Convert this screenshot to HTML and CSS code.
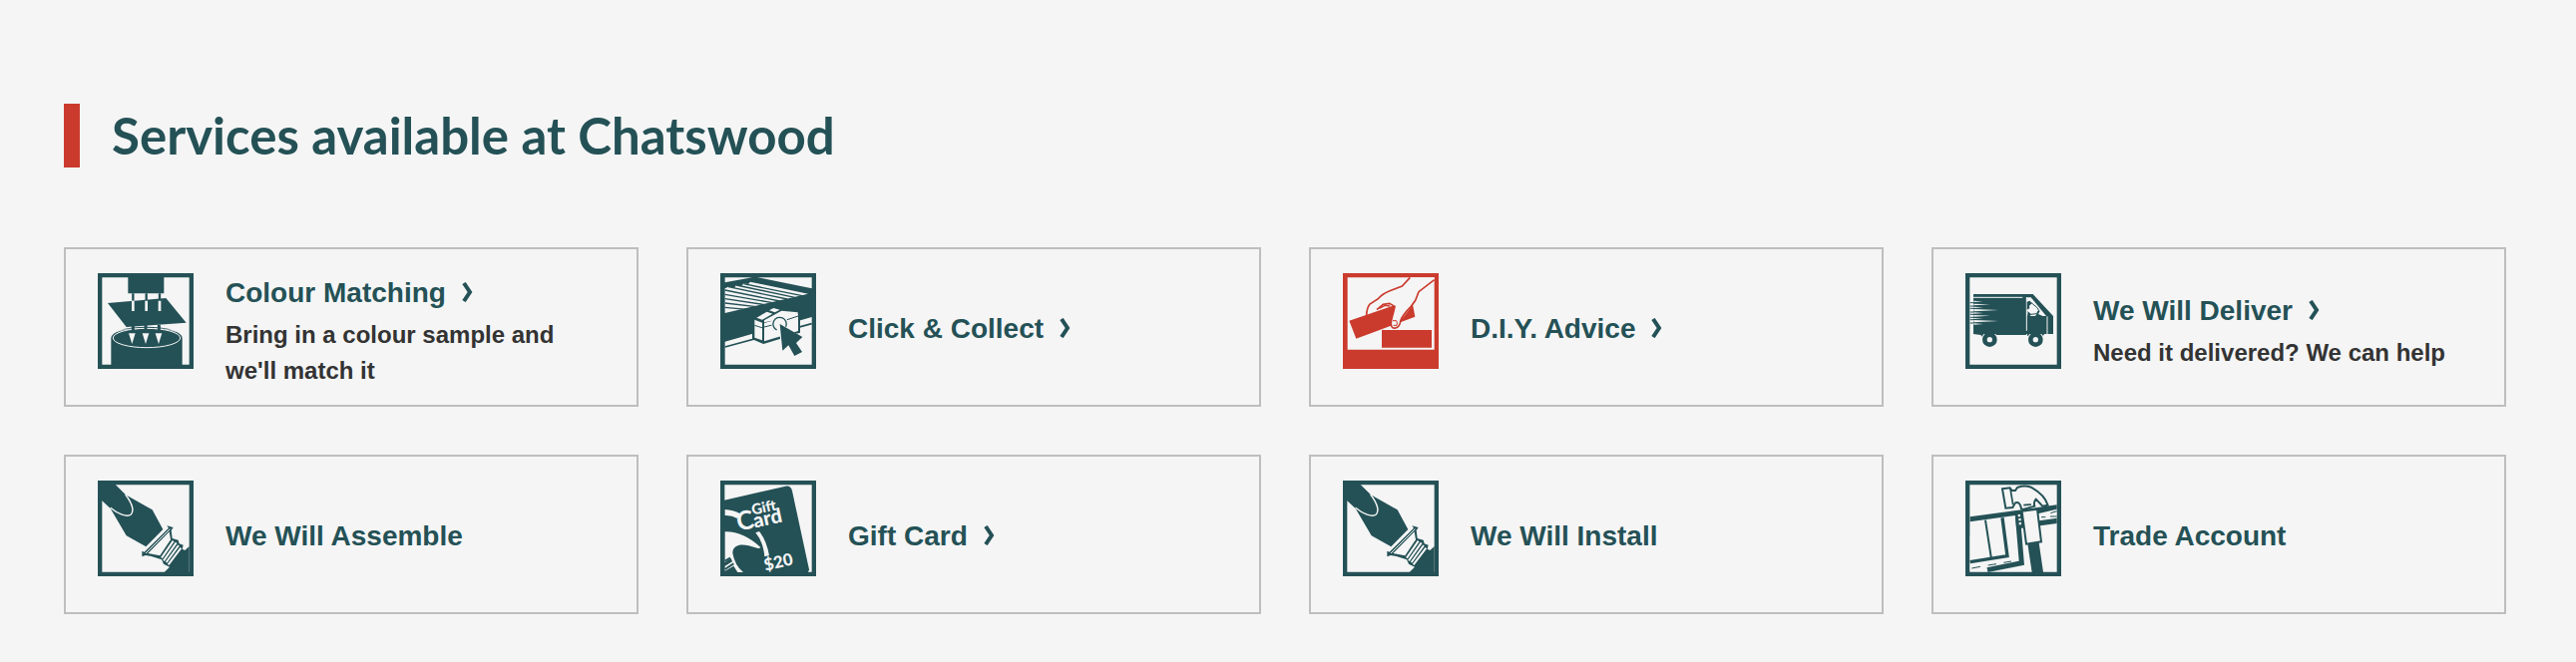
FILE: index.html
```html
<!DOCTYPE html>
<html lang="en">
<head>
    <meta charset="UTF-8">
    <meta name="viewport" content="width=device-width, initial-scale=1.0">
    <title>Services available at Chatswood</title>
    <link rel="stylesheet" href="styles.css">
</head>
<body>
    <section class="services">
        <h2 class="services-heading">Services available at Chatswood</h2>

        <ul class="services-grid">
            <li>
                <a class="card" href="#colour-matching">
                    <svg class="icon" viewBox="24 27 288 288" aria-hidden="true">
                        <path class="frame" d="M30.500 33.500H305.500V308.500H30.500Z"/>
                        <path class="ink" d="M115 30H223V88H115Z"/>
                        <path class="line" stroke-width="7" d="M130 88V110M170 88V110M210 88V110"/>
                        <path class="ink" d="M54 117L229 102L290 176L110 189Z"/>
                        <path class="cut" stroke-width="8" d="M130 110V141M170 110V141M210 110V141"/>
                        <path class="ink" d="M64 222A107 34 0 0 1 278 222V310H64Z"/>
                        <ellipse class="cut" stroke-width="3" cx="171" cy="222" rx="101" ry="29"/>
                        <path class="cut" stroke-width="2" d="M82 203C110 190 230 190 260 203"/>
                        <path class="line" stroke-width="9" d="M130 182V208M168 182V208M208 182V208"/>
                        <path class="paper" d="M117 208H137L127 240ZM158 208H178L168 240ZM197 208H217L207 240Z"/>
                    </svg>
                    <div class="card-text">
                        <h3 class="card-title">Colour Matching<svg class="chevron" viewBox="0 0 12 20" aria-hidden="true"><path d="M2 1L8 10L2 19"/></svg></h3>
                        <p class="card-desc">Bring in a colour sample and we'll match it</p>
                    </div>
                </a>
            </li>
            <li>
                <a class="card" href="#click-collect">
                    <svg class="icon" viewBox="24 27 288 288" aria-hidden="true">
                        <path class="ink" d="M24 27H312V315H24Z"/>
                        <path class="paper" d="M38 40H120L38 55ZM136 40H299V73Z"/>
                        <path class="paper" d="M38 73L48 68L68 70L72 62L88 65L94 58L108 60L114 53L288 89L38 147Z"/>
                        <path class="line" stroke-width="4" d="M94 59L270 95M72 63L248 100M48 68L225 105M38 78L203 111M38 91L181 116M38 104L158 122M38 117L132 128M38 130L104 136"/>
                        <path class="paper" d="M38 233L299 159V302H38Z"/>
                        <path class="line" stroke-width="5" d="M38 249L299 179"/>
                        <path class="ink" d="M120 164L183 127L264 142V206L154 240L120 226Z"/>
                        <path class="paper" d="M133 161L164 143L181 149L150 167ZM171 139L184 132L203 137L188 145ZM156 169L208 140L257 145V157L156 175Z"/>
                        <path class="paper" d="M127 167L150 176V229L127 221ZM156 177L258 150V201L156 232Z"/>
                        <path class="line" stroke-width="3" d="M127 184L152 192M156 189L184 182M222 168L258 156"/>
                        <path class="paper" d="M178 181A25 25 0 1 1 222 195L278 219L260 235L277 265L247 281L227 251L209 266L202 206A25 25 0 0 1 178 181Z"/>
                        <path class="line" stroke-width="4" d="M194 198A20 20 0 1 1 221 188"/>
                        <path class="ink" d="M203 180L271 219L252 237L270 264L247 276L229 244L211 260Z"/>
                    </svg>
                    <div class="card-text">
                        <h3 class="card-title">Click &amp; Collect<svg class="chevron" viewBox="0 0 12 20" aria-hidden="true"><path d="M2 1L8 10L2 19"/></svg></h3>
                    </div>
                </a>
            </li>
            <li>
                <a class="card" href="#diy-advice">
                    <svg class="icon icon-red" viewBox="24 27 288 288" aria-hidden="true">
                        <path class="ink" d="M24 27H312V315H24Z"/>
                        <path class="paper" d="M38 40H299V257H38Z"/>
                        <path class="ink" d="M141 198H291V251H141Z"/>
                        <path class="ink" d="M43 170L231 106L241 158L64 224Z"/>
                        <!-- hand -->
                        <path class="paper" d="M226 40L202 66L165 80L130 104L105 120Q96 132 94 151L127 138L147 121L167 119L180 128L173 155L168 182Q172 194 184 191Q193 188 197 170L231 127L252 84L299 48V40Z"/>
                        <path class="line" stroke-width="5" d="M226 40L202 66L165 80Q142 89 130 104L105 120Q96 132 95 153"/>
                        <path class="line" stroke-width="5" d="M299 47L252 83L242 109L229 127Q205 151 198 168C196 187 187 194 175 192C165 188 168 174 172 160L178 137L180 127L164 118L145 121L126 137"/>
                        <path class="line" stroke-width="4" d="M134 133L150 124L166 126"/>
                        <path class="line" stroke-width="3" d="M174 170H185Q189 176 186 184H176"/>
                    </svg>
                    <div class="card-text">
                        <h3 class="card-title">D.I.Y. Advice<svg class="chevron" viewBox="0 0 12 20" aria-hidden="true"><path d="M2 1L8 10L2 19"/></svg></h3>
                    </div>
                </a>
            </li>
            <li>
                <a class="card" href="#delivery">
                    <svg class="icon" viewBox="24 27 288 288" aria-hidden="true">
                        <path class="frame" d="M30.500 33.500H305.500V308.500H30.500Z"/>
                        <path class="ink" d="M48 90H227L288 156V210H262L250 222H220L208 213H118L110 222H78L70 213L48 210Z"/>
                        <path class="cut" stroke-width="3" d="M48 100H196M208 99V216M270 157V210"/>
                        <path class="paper" d="M208 100H221L267 156H208Z"/>
                        <path class="ink" d="M209 113L218 110L224 118L216 125L217 133L209 137ZM212 144L222 151L218 156H210ZM237 152L243 139L248 141L243 150L258 157H233Z"/>
                        <path class="line" stroke-width="3" d="M222 116L239 130L245 139L238 149L221 151L211 143"/>
                        <!-- speed lines -->
                        <path class="paper" d="M49 110L76 112L49 114ZM49 119L98 121L49 124ZM49 128L78 130L49 132ZM49 135L124 138L49 142ZM49 145L78 147L49 149ZM49 153L98 155L49 158ZM49 162L78 164L49 165ZM49 168L124 171L49 175ZM49 178L78 180L49 182Z"/>
                        <path class="line" stroke-width="3" d="M38 116H48M38 126H48M38 133H48M38 144H48M38 151H48M38 160H48M38 167H48M38 177H48"/>
                        <circle class="paper" cx="97" cy="227" r="25"/>
                        <circle class="paper" cx="235" cy="227" r="25"/>
                        <path class="ink" d="M70 200H262V210H70Z"/>
                        <circle class="ink" cx="97" cy="227" r="22"/>
                        <circle class="paper" cx="97" cy="227" r="8"/>
                        <circle class="ink" cx="235" cy="227" r="22"/>
                        <circle class="paper" cx="235" cy="227" r="8"/>
                    </svg>
                    <div class="card-text">
                        <h3 class="card-title">We Will Deliver<svg class="chevron" viewBox="0 0 12 20" aria-hidden="true"><path d="M2 1L8 10L2 19"/></svg></h3>
                        <p class="card-desc">Need it delivered? We can help</p>
                    </div>
                </a>
            </li>
            <li>
                <div class="card">
                    <svg class="icon" viewBox="24 24 288 288" aria-hidden="true">
                        <g id="screwdriver">
                            <path class="frame" d="M30.500 30.500H305.500V305.500H30.500Z"/>
                            <path class="ink" d="M36 36H77L108 67L188 112L220 171L169 223L110 190L62 108L36 84Z"/>
                            <path class="cut" stroke-width="4" d="M107 66C134 101 130 119 124 126C113 136 83 124 62 106"/>
                            <path class="ink" d="M299 222V300H224L240 284L222 275L216 262L185 252L168 249L157 253V236L164 239L237 167L232 160L251 165L245 174L248 198L266 203L269 214L281 218L278 230L286 234Z"/>
                            <path class="paper" d="M175 243L239 178L243 202L211 250Z"/>
                            <path class="cut" stroke-width="6" d="M216 257L251 206M222 265L260 211M230 270L267 219M236 277L274 227"/>
                            <path class="cut" stroke-width="3" d="M168 243L241 170"/>
                        </g>
                    </svg>
                    <div class="card-text">
                        <h3 class="card-title">We Will Assemble</h3>
                    </div>
                </div>
            </li>
            <li>
                <a class="card" href="#gift-card">
                    <svg class="icon" viewBox="24 24 288 288" aria-hidden="true">
                        <path class="frame" d="M30.500 30.500H305.500V305.500H30.500Z"/>
                        <path class="ink" d="M36 83L220 41Q236 38 240 55L291 292L287 302H36Z"/>
                        <!-- ribbon -->
                        <path class="paper" d="M38 111Q62 112 84 124L75 138Q58 128 38 129ZM130 181L141 177Q163 204 171 250L157 253Q153 208 130 181ZM38 178Q92 176 145 225Q141 231 130 226C92 211 61 215 61 242Q67 278 93 300H76L64 281L38 296V281L60 268L56 258L38 270Z"/>
                        <path class="line" stroke-width="6" d="M38 266L54 257M38 291L64 274"/>
                        <g transform="rotate(-12 120 130)">
                            <text class="gift-text gift-text-back" x="70" y="167" font-size="78">C</text>
                            <text class="gift-text" x="120" y="167" font-size="60">ard</text>
                            <text class="gift-text" x="122" y="128" font-size="44">Gift</text>
                        </g>
                        <text class="gift-text" x="160" y="296" font-size="50" transform="rotate(-13 160 296)">$20</text>
                    </svg>
                    <div class="card-text">
                        <h3 class="card-title">Gift Card<svg class="chevron" viewBox="0 0 12 20" aria-hidden="true"><path d="M2 1L8 10L2 19"/></svg></h3>
                    </div>
                </a>
            </li>
            <li>
                <div class="card">
                    <svg class="icon" viewBox="24 24 288 288" aria-hidden="true">
                        <use href="#screwdriver"/>
                    </svg>
                    <div class="card-text">
                        <h3 class="card-title">We Will Install</h3>
                    </div>
                </div>
            </li>
            <li>
                <div class="card">
                    <svg class="icon" viewBox="24 24 288 288" aria-hidden="true">
                        <path class="frame" d="M30.500 30.500H305.500V305.500H30.500Z"/>
                        <!-- door and frame -->
                        <path class="ink" d="M38 133L299 97V153L38 189Z"/>
                        <path class="paper" d="M38 148L174 129L186 270L38 294ZM242 124L299 110V137L246 145Z"/>
                        <path class="line" stroke-width="6" d="M84 143L102 260"/>
                        <path class="line" stroke-width="10" d="M135 136L150 251L38 269"/>
                        <path class="line" stroke-width="15" d="M181 128L193 272L90 293"/>
                        <path class="line" stroke-width="3" d="M43 288L69 283M92 279L117 275M139 271L162 267M252 134H265M279 132H299M280 122L299 116"/>
                        <path class="paper" d="M182 126H189V133H182ZM184 138H191V145H184ZM185 150H192V157H185Z"/>
                        <!-- hammer -->
                        <path class="paper" stroke="currentColor" stroke-width="6" d="M135 49L158 46L164 54H174L180 45Q207 36 225 46Q263 68 272 98L256 101L236 80Q228 88 232 101L198 111L192 109Q188 85 174 91L166 105L145 107Z"/>
                        <path class="line" stroke-width="5" d="M159 48L167 96M199 98L222 96"/>
                        <path class="paper" stroke="currentColor" stroke-width="6" d="M194 116L240 110L252 208L207 215Z"/>
                        <path class="ink" d="M211 214L245 211L258 300H224Z"/>
                    </svg>
                    <div class="card-text">
                        <h3 class="card-title">Trade Account</h3>
                    </div>
                </div>
            </li>
        </ul>
    </section>
</body>
</html>
```
FILE: styles.css
```css
* {
    box-sizing: border-box;
}
body {
    margin: 0;
    background-color: #f5f5f5;
    color: #333;
    font-family: "Liberation Sans", Arial, sans-serif;
}
.services {
    padding: 104px 70px 48px 64px;
}
.services-heading {
    margin: 0 0 80px;
    padding-left: 32px;
    border-left: 16px solid #cb3b2d;
    color: #245156;
    font-family: Lato, sans-serif;
    font-size: 51px;
    font-weight: 700;
    line-height: 64px;
}
.services-grid {
    display: grid;
    grid-template-columns: repeat(4, 1fr);
    gap: 48px;
    margin: 0;
    padding: 0;
    list-style: none;
}
.card {
    display: flex;
    align-items: center;
    gap: 32px;
    min-height: 160px;
    padding: 0 32px;
    border: 2px solid #bebebe;
    color: #333;
    text-decoration: none;
}
.card-text {
    padding-top: 4px;
}
.card-title {
    margin: 0;
    color: #245156;
    font-size: 28px;
    font-weight: 700;
    line-height: 48px;
}
.card-desc {
    margin: 0;
    font-size: 24px;
    font-weight: 700;
    line-height: 36px;
}
.chevron {
    width: 12px;
    height: 20px;
    margin-left: 16px;
}
.chevron path {
    fill: none;
    stroke: #245156;
    stroke-width: 4;
}

/* icons */
.icon {
    flex: none;
    align-self: flex-start;
    width: 96px;
    height: 96px;
    margin-top: 24px;
    color: #245156;
}
.icon-red {
    color: #cb3b2d;
}
.frame {
    fill: none;
    stroke: currentColor;
    stroke-width: 13;
}
.ink {
    fill: currentColor;
}
.paper {
    fill: #f5f5f5;
}
.line {
    fill: none;
    stroke: currentColor;
}
.cut {
    fill: none;
    stroke: #f5f5f5;
}
.gift-text {
    fill: #f5f5f5;
    font-family: Lato, sans-serif;
    font-weight: 900;
}
.gift-text-back {
    font-weight: 700;
}
```
